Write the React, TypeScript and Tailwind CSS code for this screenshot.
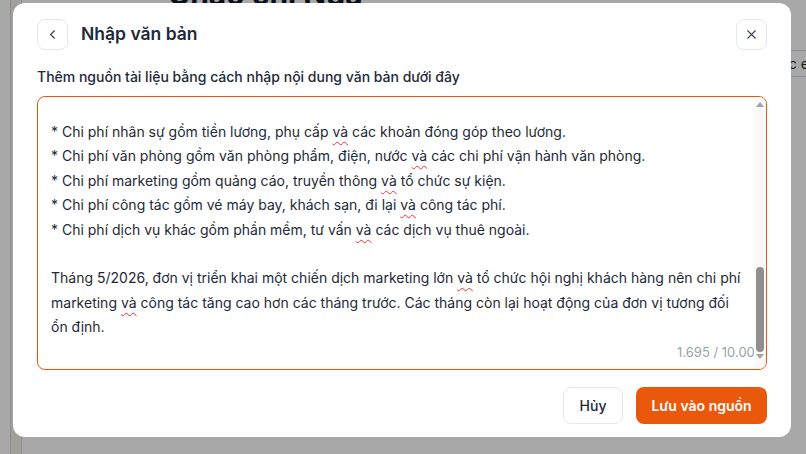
import { ChevronLeft, X } from "lucide-react";

function Va() {
  return (
    <span className="underline decoration-wavy decoration-red-500 decoration-1 underline-offset-[4px]">và</span>
  );
}

const bullets: React.ReactNode[] = [
  <>Chi phí nhân sự gồm tiền lương, phụ cấp <Va /> các khoản đóng góp theo lương.</>,
  <>Chi phí văn phòng gồm văn phòng phẩm, điện, nước <Va /> các chi phí vận hành văn phòng.</>,
  <>Chi phí marketing gồm quảng cáo, truyền thông <Va /> tổ chức sự kiện.</>,
  <>Chi phí công tác gồm vé máy bay, khách sạn, đi lại <Va /> công tác phí.</>,
  <>Chi phí dịch vụ khác gồm phần mềm, tư vấn <Va /> các dịch vụ thuê ngoài.</>,
];

export default function App() {
  return (
    <div className="relative w-[806px] h-[454px] overflow-hidden bg-white font-['Inter',sans-serif]">
      {/* page behind the dialog */}
      <div className="flex h-full">
        <div className="w-[11px] shrink-0 h-full border-r border-gray-300" />
        <div className="w-[11px] shrink-0 h-full bg-[#f7f1ea] border-r border-gray-300" />
        <div className="flex-1 min-w-0 overflow-hidden flex flex-col">
          <div className="pl-[146px] -mt-[23px] text-[30px] font-bold text-gray-900 leading-[34px] whitespace-nowrap">Chao chi Nga</div>
          <div className="mt-[39px] h-[27px] border-y border-gray-300 flex items-center pl-[759px] text-sm text-gray-800 whitespace-nowrap">
            ác email
          </div>
        </div>
      </div>

      <div className="absolute inset-0 bg-black/[0.34]" />

      {/* dialog */}
      <div className="absolute left-[13px] top-[3px] w-[778px] h-[434px] bg-white rounded-xl px-6 pt-4 pb-[13px] flex flex-col">
        <div className="flex items-center h-[31px]">
          <button className="w-[31px] h-[31px] rounded-lg border border-gray-200 flex items-center justify-center text-gray-700">
            <ChevronLeft size={15} strokeWidth={1.75} />
          </button>
          <h2 className="ml-[13px] text-[17.5px] font-semibold text-gray-800">Nhập văn bản</h2>
          <button className="ml-auto w-[31px] h-[31px] rounded-lg border border-gray-200 flex items-center justify-center text-gray-700">
            <X size={15} strokeWidth={1.75} />
          </button>
        </div>

        <p className="mt-[17px] text-sm leading-5 font-medium text-gray-800">
          Thêm nguồn tài liệu bằng cách nhập nội dung văn bản dưới đây
        </p>

        <div className="relative mt-[9px] h-[274px] border border-[#ea580c] rounded-lg overflow-hidden">
          <div className="pl-[13px] pt-[23px] text-sm leading-[24.4px] text-gray-800 whitespace-nowrap">
            {bullets.map((b, i) => (
              <div key={i}>* {b}</div>
            ))}
            <div>&nbsp;</div>
            <div>Tháng 5/2026, đơn vị triển khai một chiến dịch marketing lớn <Va /> tổ chức hội nghị khách hàng nên chi phí</div>
            <div>marketing <Va /> công tác tăng cao hơn các tháng trước. Các tháng còn lại hoạt động của đơn vị tương đối</div>
            <div>ổn định.</div>
          </div>

          <span className="absolute right-[3px] bottom-[7px] text-[13px] text-gray-400">1.695 / 10.000</span>

          {/* scrollbar */}
          <div className="absolute top-0 bottom-0 right-0 w-[12px] bg-[#fafafa] flex flex-col items-center">
            <div className="mt-[5px] w-0 h-0 border-x-[4px] border-x-transparent border-b-[5px] border-b-[#a3a3a3]" />
            <div className="mt-[160px] w-[8px] h-[85px] rounded-full bg-[#8f8f8f]" />
            <div className="mt-[2px] w-0 h-0 border-x-[4px] border-x-transparent border-t-[5px] border-t-[#a3a3a3]" />
          </div>
        </div>

        <div className="mt-auto flex justify-end gap-[13px]">
          <button className="w-[60px] h-[37px] rounded-lg border border-gray-200 text-sm font-medium text-gray-800">Hủy</button>
          <button className="w-[131px] h-[37px] rounded-lg bg-[#ea580c] text-sm font-semibold text-white">Lưu vào nguồn</button>
        </div>
      </div>
    </div>
  );
}
